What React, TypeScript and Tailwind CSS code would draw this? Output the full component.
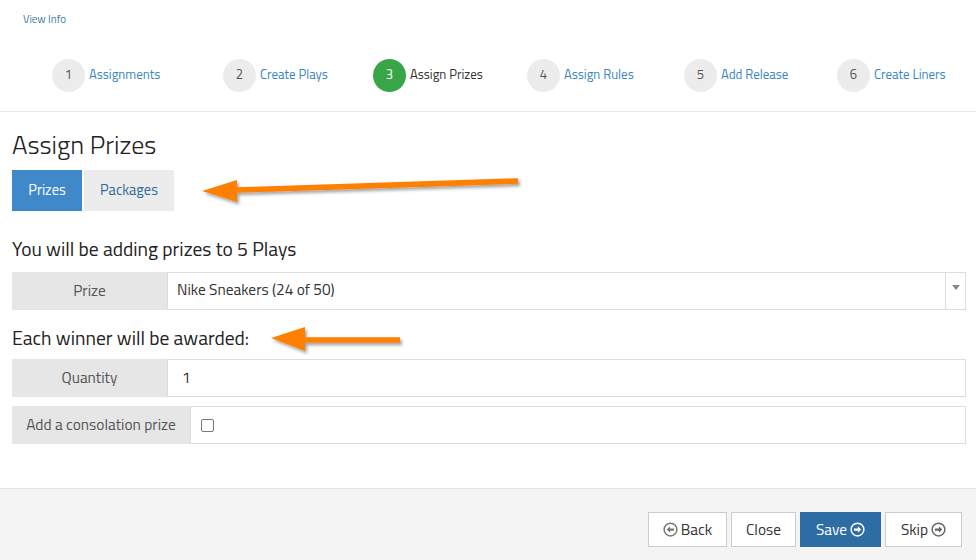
import React from "react";

const steps = [
  { n: 1, label: "Assignments", w: "w-[171px]" },
  { n: 2, label: "Create Plays", w: "w-[150px]" },
  { n: 3, label: "Assign Prizes", w: "w-[154px]", active: true },
  { n: 4, label: "Assign Rules", w: "w-[157px]" },
  { n: 5, label: "Add Release", w: "w-[153px]" },
  { n: 6, label: "Create Liners", w: "w-[120px]" },
];

function CircleArrow({ dir, color, fill }: { dir: "left" | "right"; color: string; fill: string }) {
  return (
    <svg width="15" height="15" viewBox="0 0 16 16" className="inline-block">
      <circle cx="8" cy="8" r="6.8" fill={fill} stroke={color} strokeWidth="1.6" />
      {dir === "left" ? (
        <path d="M4 8 L7.6 4.6 L7.6 6.8 L11.8 6.8 L11.8 9.2 L7.6 9.2 L7.6 11.4 Z" fill={color} />
      ) : (
        <path d="M12 8 L8.4 4.6 L8.4 6.8 L4.2 6.8 L4.2 9.2 L8.4 9.2 L8.4 11.4 Z" fill={color} />
      )}
    </svg>
  );
}

function Arrow({ w, h, tail, tip, head, id }: { id: string; w: number; h: number; tail: [number, number]; tip: [number, number]; head: { bx: number; top: number; bot: number; sy: number } }) {
  const t = 2.8;
  const pts = [
    [tip[0], tip[1]],
    [head.bx, head.top],
    [head.bx, head.sy - t],
    [tail[0], tail[1] - t],
    [tail[0], tail[1] + t],
    [head.bx, head.sy + t],
    [head.bx, head.bot],
  ]
    .map((p) => p.join(","))
    .join(" ");
  return (
    <svg width={w} height={h} viewBox={`0 0 ${w} ${h}`} className="overflow-visible">
      <defs>
        <filter id={id} x="-10%" y="-50%" width="120%" height="200%">
          <feDropShadow dx="2" dy="2.5" stdDeviation="1.6" floodColor="#000" floodOpacity="0.35" />
        </filter>
      </defs>
      <polygon points={pts} fill="#ff7f00" filter={`url(#${id})`} />
    </svg>
  );
}

export default function App() {
  return (
    <div
      className="w-[976px] h-[560px] bg-white text-[#333] flex flex-col overflow-hidden"
      style={{ fontFamily: '"Titillium Web", Lato, "Open Sans", sans-serif' }}
    >
      <div className="pl-[23px] pt-[5px] h-[55px]">
        <a className="text-[11px] text-[#3a7ca5] leading-[14px]">View Info</a>
      </div>
      <div className="flex pl-[52px] h-[40px] items-center">
        {steps.map((s) => (
          <div key={s.n} className={`${s.w} flex items-center shrink-0`}>
            <div
              className={`w-[33px] h-[33px] rounded-full flex items-center justify-center text-[13px] ${
                s.active ? "bg-[#37a548] text-white" : "bg-[#ececec] text-[#555]"
              }`}
            >
              {s.n}
            </div>
            <span className={`ml-[4px] text-[13px] ${s.active ? "text-[#333]" : "text-[#3a87c0]"}`}>{s.label}</span>
          </div>
        ))}
      </div>
      <div className="h-[17px] border-b border-[#e8e8e8]" />

      <div className="px-[12px] pr-[10px] flex flex-col">
        <h1 className="mt-[17px] text-[26px] leading-[32px] font-light text-[#222]">Assign Prizes</h1>
        <div className="relative mt-[9px] flex items-center">
          <div className="w-[70px] h-[41px] bg-[#3f88c9] text-white text-[14.5px] flex items-center justify-center">Prizes</div>
          <div className="ml-[2px] w-[90px] h-[41px] bg-[#ececec] text-[#336b9b] text-[14.5px] flex items-center justify-center">Packages</div>
          <div className="absolute left-[190px] top-0">
            <Arrow id="a1" w={320} h={30} tip={[0, 21]} tail={[316, 11]} head={{ bx: 35, top: 10, bot: 32, sy: 20 }} />
          </div>
        </div>

        <div className="mt-[26px] text-[19.5px] leading-[24px] text-[#222]">You will be adding prizes to 5 Plays</div>
        <div className="mt-[11px] flex h-[38px]">
          <div className="w-[155px] bg-[#e6e6e6] text-[#555] text-[15.4px] flex items-center justify-center">Prize</div>
          <div className="flex-1 flex border border-[#ddd] bg-white">
            <div className="flex-1 pl-[9px] text-[15.4px] text-[#333] flex items-center pb-[3px]">Nike Sneakers (24 of 50)</div>
            <div className="w-[20px] border-l border-[#ddd] flex items-center justify-center pb-[6px]">
              <svg width="8" height="6" viewBox="0 0 8 6">
                <path d="M0 0 H8 L4 5 Z" fill="#888" />
              </svg>
            </div>
          </div>
        </div>

        <div className="relative mt-[16px] h-[24px] flex items-center">
          <div className="text-[19.5px] leading-[24px] text-[#222]">Each winner will be awarded:</div>
          <div className="absolute left-[259px] top-0">
            <Arrow id="a2" w={132} h={26} tip={[0, 12]} tail={[129, 14]} head={{ bx: 34, top: 1, bot: 25, sy: 14 }} />
          </div>
        </div>
        <div className="mt-[9px] flex h-[38px]">
          <div className="w-[155px] bg-[#e6e6e6] text-[#555] text-[15.4px] flex items-center justify-center">Quantity</div>
          <div className="flex-1 border border-[#ddd] bg-white pl-[14px] text-[15.4px] flex items-center">1</div>
        </div>
        <div className="mt-[9px] flex h-[38px]">
          <div className="w-[178px] bg-[#e6e6e6] text-[#555] text-[15.4px] flex items-center justify-center">Add a consolation prize</div>
          <div className="flex-1 border border-[#ddd] bg-white pl-[10px] flex items-center">
            <div className="w-[13px] h-[13px] border border-[#777] rounded-[2px] bg-white" />
          </div>
        </div>
      </div>

      <div className="mt-auto h-[72px] bg-[#f4f4f4] border-t border-[#e4e4e4] flex items-start justify-end pr-[14px] pt-[23px] gap-[4px]">
        <button className="w-[79px] h-[35px] bg-white border border-[#ccc] text-[15.4px] text-[#333] flex items-center justify-center gap-[3px]">
          <CircleArrow dir="left" color="#777" fill="#fff" />
          Back
        </button>
        <button className="w-[65px] h-[35px] bg-white border border-[#ccc] text-[15.4px] text-[#333] flex items-center justify-center">Close</button>
        <button className="w-[81px] h-[35px] bg-[#2e6da4] border border-[#2e6da4] text-[15.4px] text-white flex items-center justify-center gap-[3px]">
          Save
          <CircleArrow dir="right" color="#fff" fill="#2e6da4" />
        </button>
        <button className="w-[77px] h-[35px] bg-white border border-[#ccc] text-[15.4px] text-[#333] flex items-center justify-center gap-[3px]">
          Skip
          <CircleArrow dir="right" color="#666" fill="#fff" />
        </button>
      </div>
    </div>
  );
}
